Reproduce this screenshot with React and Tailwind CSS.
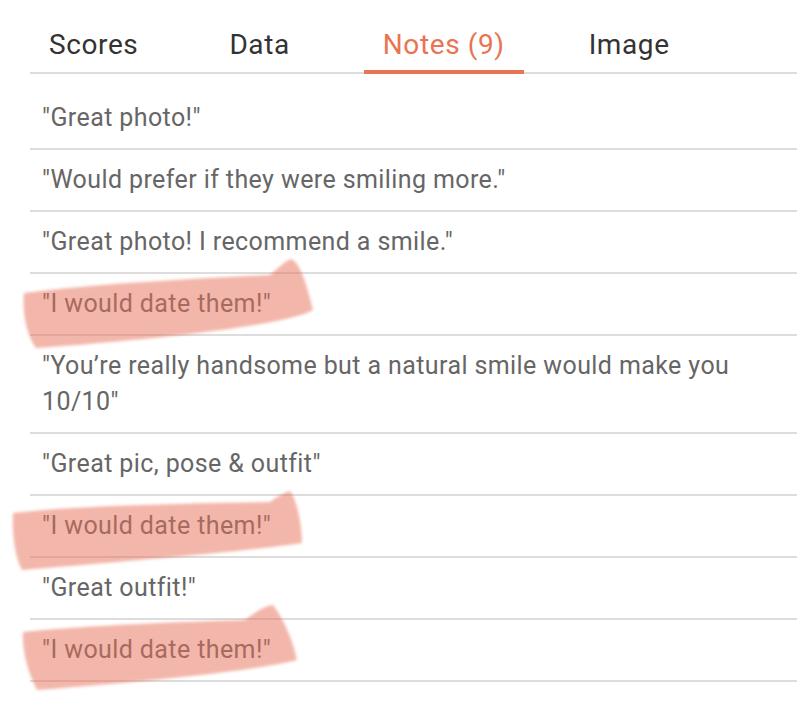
import React from "react";

const tabs = [
  { label: "Scores", gap: "" },
  { label: "Data", gap: "ml-[53px]" },
  { label: "Notes (9)", gap: "ml-[55px]", active: true },
  { label: "Image", gap: "ml-[46px]" },
];

const notes = [
  '"Great photo!"',
  '"Would prefer if they were smiling more."',
  '"Great photo! I recommend a smile."',
  '"I would date them!"',
  '"You\u2019re really handsome but a natural smile would make you 10/10"',
  '"Great pic, pose & outfit"',
  '"I would date them!"',
  '"Great outfit!"',
  '"I would date them!"',
];

// highlighter strokes drawn over the "date" rows
const strokes = [
  "M24,293 C90,284 200,278 270,275 C278,268 284,262 291,259 C300,262 307,285 313,310 C290,325 150,340 36,348 C26,335 22,310 24,293 Z",
  "M13,513 C80,505 200,503 270,502 C278,496 284,493 290,491 C297,500 302,525 302,543 C260,550 120,562 22,570 C14,555 12,530 13,513 Z",
  "M23,632 C90,625 180,622 245,620 C255,612 265,606 273,605 C283,618 293,640 297,660 C250,672 130,683 37,690 C27,670 22,650 23,632 Z",
];

const App = () => {
  return (
    <div className="relative w-[797px] h-[705px] overflow-hidden bg-white pl-[30px] font-['Roboto',sans-serif]">
      {/* Tab bar */}
      <div className="flex h-[74px] border-b-2 border-[#dddddd]">
        {tabs.map((t) => (
          <div
            key={t.label}
            className={`relative h-full px-[19px] pt-[28px] text-[28px] leading-[34px] tracking-[0.6px] ${t.gap} ${
              t.active ? "text-[#ea7352]" : "text-[#333333]"
            }`}
          >
            {t.label}
            {t.active && (
              <div className="absolute left-0 right-0 bottom-[-2px] h-[4px] bg-[#ea7352]"></div>
            )}
          </div>
        ))}
      </div>

      {/* Notes list */}
      <div className="mt-[14px]">
        {notes.map((n, i) => (
          <div
            key={i}
            className="border-b-2 border-[#dddddd] py-3 pl-3 pr-3 text-[25px] leading-[36px] tracking-[0.4px] text-[#666666]"
          >
            {n}
          </div>
        ))}
      </div>

      {/* Highlighter overlay */}
      <svg
        className="pointer-events-none absolute left-0 top-0"
        width="797"
        height="705"
        viewBox="0 0 797 705"
      >
        <defs>
          <filter id="soft" x="-5%" y="-20%" width="110%" height="140%">
            <feGaussianBlur stdDeviation="1.6" />
          </filter>
        </defs>
        {strokes.map((d, i) => (
          <path key={i} d={d} fill="#e86e55" fillOpacity="0.5" filter="url(#soft)" />
        ))}
      </svg>
    </div>
  );
};

export default App;
